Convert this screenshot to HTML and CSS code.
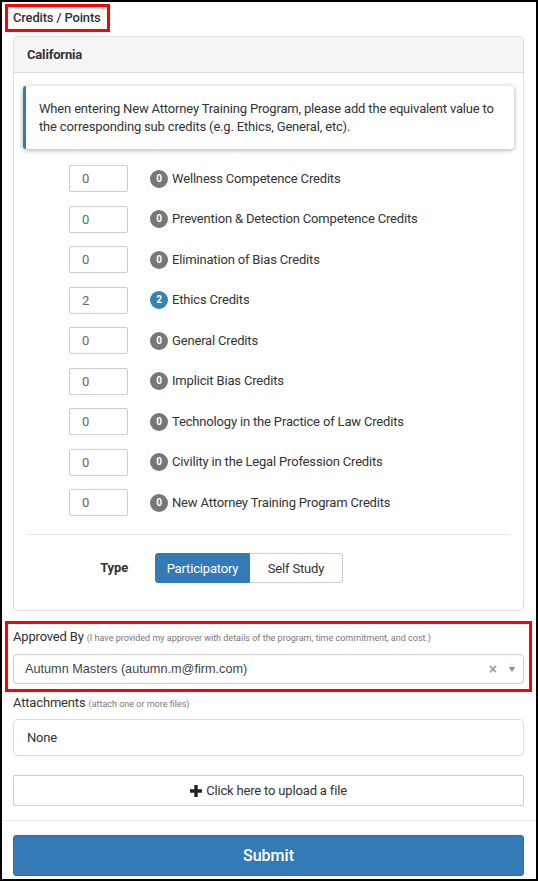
FILE: index.html
```html
<!DOCTYPE html>
<html lang="en">
<head>
  <meta charset="UTF-8" />
  <meta name="viewport" content="width=device-width, initial-scale=1.0"/>
  <title>Credits / Points</title>
  <link rel="stylesheet" href="styles.css">
</head>
<body>
  <div class="frame">
    <div class="section-title">Credits / Points</div>

    <div class="panel">
      <div class="panel-heading">California</div>
      <div class="panel-body">
        <div class="note">
          When entering New Attorney Training Program, please add the equivalent value to the corresponding sub credits (e.g. Ethics, General, etc).
        </div>

        <div class="credit-list">
          <div class="credit-row">
            <input class="credit-input" type="text" value="0" />
            <span class="badge">0</span>
            <span class="credit-name">Wellness Competence Credits</span>
          </div>
          <div class="credit-row">
            <input class="credit-input" type="text" value="0" />
            <span class="badge">0</span>
            <span class="credit-name">Prevention &amp; Detection Competence Credits</span>
          </div>
          <div class="credit-row">
            <input class="credit-input" type="text" value="0" />
            <span class="badge">0</span>
            <span class="credit-name">Elimination of Bias Credits</span>
          </div>
          <div class="credit-row">
            <input class="credit-input" type="text" value="2" />
            <span class="badge badge-info">2</span>
            <span class="credit-name">Ethics Credits</span>
          </div>
          <div class="credit-row">
            <input class="credit-input" type="text" value="0" />
            <span class="badge">0</span>
            <span class="credit-name">General Credits</span>
          </div>
          <div class="credit-row">
            <input class="credit-input" type="text" value="0" />
            <span class="badge">0</span>
            <span class="credit-name">Implicit Bias Credits</span>
          </div>
          <div class="credit-row">
            <input class="credit-input" type="text" value="0" />
            <span class="badge">0</span>
            <span class="credit-name">Technology in the Practice of Law Credits</span>
          </div>
          <div class="credit-row">
            <input class="credit-input" type="text" value="0" />
            <span class="badge">0</span>
            <span class="credit-name">Civility in the Legal Profession Credits</span>
          </div>
          <div class="credit-row">
            <input class="credit-input" type="text" value="0" />
            <span class="badge">0</span>
            <span class="credit-name">New Attorney Training Program Credits</span>
          </div>
        </div>

        <hr class="divider" />

        <div class="type-row">
          <span class="type-label">Type</span>
          <div class="btn-group">
            <button type="button" class="seg seg-first active">Participatory</button>
            <button type="button" class="seg seg-last">Self Study</button>
          </div>
        </div>
      </div>
    </div>

    <div class="approver">
      <div class="field-label">Approved By <small>(I have provided my approver with details of the program, time commitment, and cost.)</small></div>
      <div class="select-box">
        <span class="select-value">Autumn Masters (autumn.m@firm.com)</span>
        <span class="select-clear">&times;</span>
        <span class="select-arrow"></span>
      </div>
    </div>

    <div class="field-label attach-label">Attachments <small>(attach one or more files)</small></div>
    <div class="file-list">None</div>

    <button type="button" class="upload-btn">
      <svg class="plus" width="12" height="12" viewBox="0 0 12 12"><path d="M4.3 0h3.4v4.3H12v3.4H7.7V12H4.3V7.7H0V4.3h4.3z" fill="#222"/></svg>
      Click here to upload a file
    </button>

    <hr class="footer-rule" />

    <button type="button" class="submit-btn">Submit</button>
  </div>
</body>
</html>
```

FILE: styles.css
```css
* {
  box-sizing: border-box;
}
body {
  margin: 0;
  font-family: Roboto, "Noto Sans", Arial, sans-serif;
  font-size: 13px;
  line-height: 18px;
  letter-spacing: -0.17px;
  color: #333;
  background: #fff;
}
.frame {
  height: 881px;
  border: 2px solid #000;
  padding: 0 12px 0 11px;
  overflow: hidden;
}
.section-title {
  display: inline-block;
  margin: 2px 0 0 -8px;
  padding: 2px 6px 2px 5px;
  border: 3px solid #f00;
  font-weight: 500;
}

/* panel */
.panel {
  margin-top: 4px;
  border: 1px solid #ddd;
  border-radius: 4px;
}
.panel-heading {
  padding: 9px 13px;
  line-height: 17px;
  background: #f5f5f5;
  border-bottom: 1px solid #ddd;
  border-radius: 4px 4px 0 0;
  font-weight: bold;
}
.panel-body {
  padding: 13px 9px 27px;
}
.note {
  padding: 14px 10px 13px 13px;
  border-left: 3px solid #337ab7;
  border-radius: 3px;
  box-shadow: 0 1px 5px rgba(0, 0, 0, 0.35);
}

/* credits */
.credit-list {
  margin-top: 16px;
  padding-left: 46px;
  display: flex;
  flex-direction: column;
  gap: 13.5px;
}
.credit-row {
  display: flex;
  align-items: center;
  height: 27px;
}
.credit-input {
  width: 59px;
  height: 27px;
  padding: 0 12px;
  border: 1px solid #ccc;
  border-radius: 2px;
  font-family: Roboto, Arial, sans-serif;
  font-size: 13px;
  color: #666;
}
.badge {
  display: inline-flex;
  align-items: center;
  justify-content: center;
  width: 18px;
  height: 18px;
  margin-left: 22px;
  border-radius: 9px;
  background: #777;
  color: #fff;
  font-size: 10px;
  font-weight: bold;
  letter-spacing: 0;
}
.badge-info {
  background: #3484b3;
}
.credit-name {
  margin-left: 4px;
}
.divider {
  margin: 18px 4px 0;
  border: 0;
  border-top: 1px solid #e5e5e5;
}
.type-row {
  display: flex;
  align-items: center;
  margin-top: 18px;
  padding-left: 46px;
}
.type-label {
  width: 59px;
  text-align: right;
  font-weight: bold;
}
.btn-group {
  display: flex;
  margin-left: 27px;
}
.seg {
  height: 30px;
  border: 1px solid #ccc;
  background: #fff;
  color: #333;
  font-family: Roboto, Arial, sans-serif;
  font-size: 13px;
  letter-spacing: -0.17px;
  padding: 0;
}
.seg-first {
  width: 95px;
  border-radius: 3px 0 0 3px;
}
.seg-last {
  width: 93px;
  border-left: 0;
  border-radius: 0 3px 3px 0;
}
.seg.active {
  background: #337ab7;
  border-color: #337ab7;
  color: #fff;
}

/* approver */
.approver {
  margin: 10px -8px 0 -8px;
  padding: 4px 5px 5px 5px;
  border: 3px solid #f00;
}
.field-label small {
  font-size: 9px;
  letter-spacing: 0;
  color: #777;
}
.select-box {
  display: flex;
  align-items: center;
  height: 30px;
  margin-top: 7px;
  padding: 0 8px 0 11px;
  border: 1px solid #ccc;
  border-radius: 4px;
  font-family: "Liberation Sans", Arial, sans-serif;
  font-size: 12.7px;
  letter-spacing: 0;
  color: #444;
}
.select-value {
  flex: 1;
}
.select-clear {
  font-size: 14px;
  font-weight: bold;
  color: #999;
  margin-right: 12px;
}
.select-arrow {
  width: 0;
  height: 0;
  border-left: 3.5px solid transparent;
  border-right: 3.5px solid transparent;
  border-top: 5px solid #888;
}

/* attachments */
.attach-label {
  margin-top: 2px;
}
.file-list {
  margin-top: 6px;
  height: 37px;
  padding: 9px 13px;
  border: 1px solid #ddd;
  border-radius: 4px;
}
.upload-btn {
  display: flex;
  align-items: center;
  justify-content: center;
  gap: 4px;
  width: 100%;
  height: 31px;
  margin-top: 19px;
  border: 1px solid #ccc;
  border-radius: 2px;
  background: #fff;
  color: #333;
  font-family: Roboto, Arial, sans-serif;
  font-size: 13px;
  letter-spacing: -0.17px;
}
.footer-rule {
  margin: 14px -12px 0 -11px;
  border: 0;
  border-top: 1px solid #e5e5e5;
}
.submit-btn {
  display: block;
  width: 100%;
  height: 41px;
  margin-top: 14px;
  border: 1px solid #2e6da4;
  border-radius: 3px;
  background: #337ab7;
  color: #fff;
  font-family: Roboto, Arial, sans-serif;
  font-size: 16px;
  font-weight: 500;
}
```
